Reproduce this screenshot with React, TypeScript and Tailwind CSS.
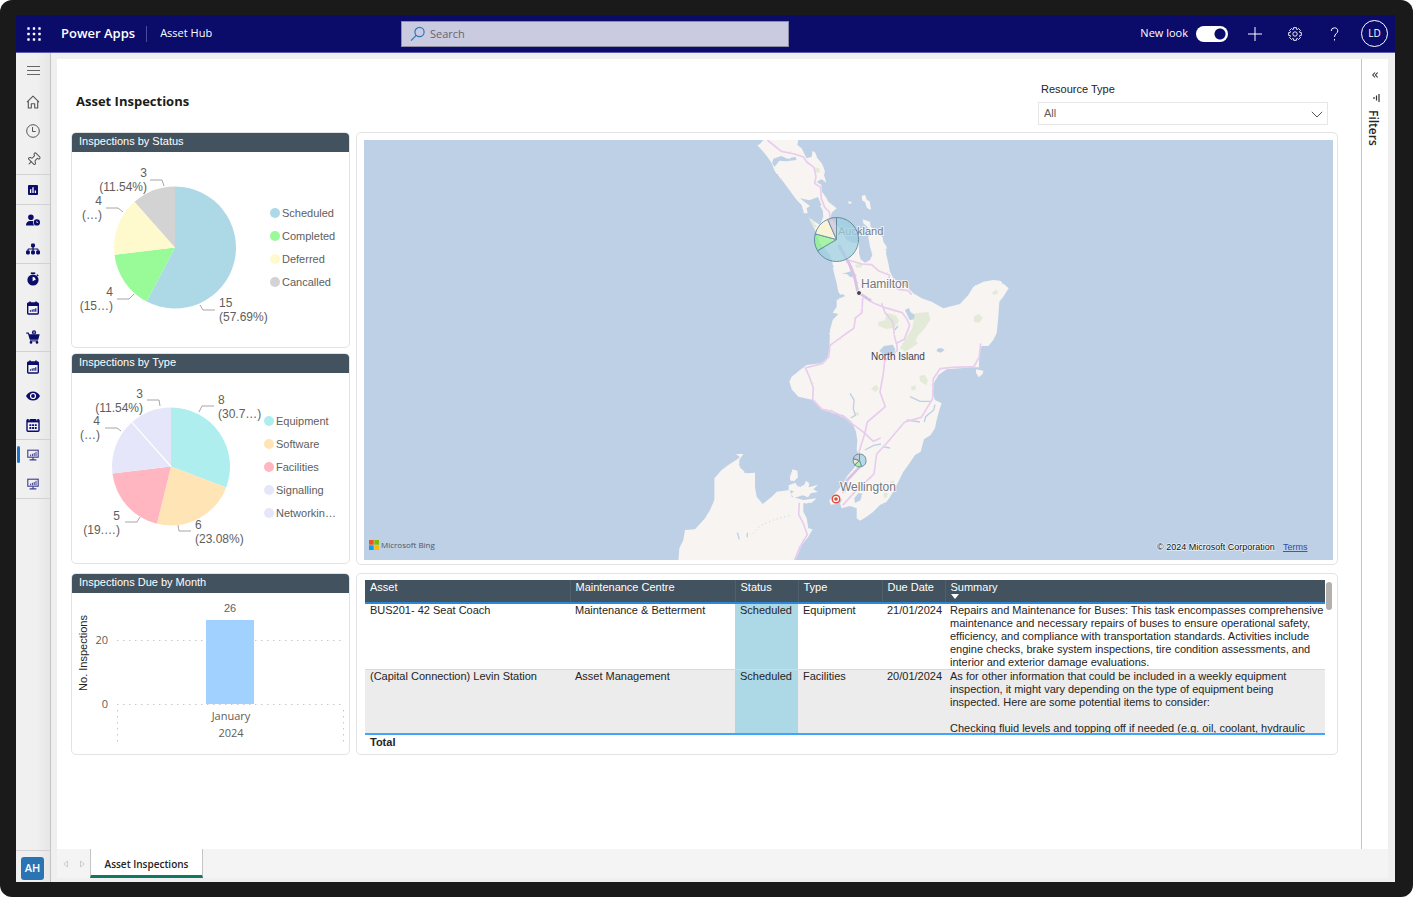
import React from "react";
import { Pin } from "lucide-react";
import { FaUserClock, FaSitemap } from "react-icons/fa6";

const segoe = "font-['Open_Sans','Noto_Sans',sans-serif]";
const arial = "font-['Liberation_Sans',Arial,sans-serif]";

/* ---------- icons ---------- */

function WaffleIcon() {
  return (
    <svg width="14" height="14" viewBox="0 0 14 14" fill="#fff" aria-hidden="true">
      {[1.5, 7, 12.5].map((y) =>
        [1.5, 7, 12.5].map((x) => <rect key={`${x}-${y}`} x={x - 1.2} y={y - 1.2} width="2.4" height="2.4" rx="0.5" />),
      )}
    </svg>
  );
}

function HomeIcon() {
  return (
    <svg width="14" height="14" viewBox="0 0 14 14" fill="none" stroke="#555" strokeWidth="1.1" strokeLinejoin="round" aria-hidden="true">
      <path d="M1 7.200 7 1.200l6 6M2.300 6v7h3V8.800h3.400V13h3V6" />
    </svg>
  );
}

function ClockIcon() {
  return (
    <svg width="14" height="14" viewBox="0 0 14 14" fill="none" stroke="#555" strokeWidth="1" aria-hidden="true">
      <circle cx="7" cy="7" r="6.3" />
      <path d="M6.500 3v4.500h3.200" />
    </svg>
  );
}

function GearIcon() {
  const teeth = 8;
  const points: string[] = [];
  for (let i = 0; i < teeth; i++) {
    const mid = (i / teeth) * 2 * Math.PI;
    [[-0.3, 5], [-0.22, 6.5], [0.22, 6.5], [0.3, 5]].forEach(([offset, r]) => {
      points.push(`${7 + r * Math.sin(mid + offset)},${7 - r * Math.cos(mid + offset)}`);
    });
  }
  return (
    <svg width="14" height="14" viewBox="0 0 14 14" fill="none" stroke="#fff" strokeWidth="0.9" strokeLinejoin="round" aria-hidden="true">
      <polygon points={points.join(" ")} />
      <circle cx="7" cy="7" r="2.2" />
    </svg>
  );
}

function ChartBoxIcon() {
  return (
    <svg width="10" height="10" viewBox="0 0 10 10" aria-hidden="true">
      <rect width="10" height="10" rx="1" fill="#0c0c6b" />
      <path d="M2.600 4.200V8M5 2.200V8M7.400 5.600V8" stroke="#fff" strokeWidth="1.3" />
    </svg>
  );
}

function StopwatchIcon() {
  return (
    <svg width="14" height="14" viewBox="0 0 14 14" aria-hidden="true">
      <path d="M4.800.400h4.400v1.600H4.800z" fill="#0c0c6b" />
      <path d="m11.300 2.200 1.400 1.400-.9.9-1.400-1.400z" fill="#0c0c6b" />
      <circle cx="7" cy="8" r="5.6" fill="#0c0c6b" />
      <path d="M6.600 4.800v4.400l3.200-1.800A3.400 3.400 0 0 0 6.600 4.800z" fill="#fff" />
    </svg>
  );
}

function CalendarChartIcon() {
  return (
    <svg width="12" height="14" viewBox="0 0 12 14" aria-hidden="true">
      <path d="M2.200.400h1.600v2H2.200zM8.200.400h1.600v2H8.200z" fill="#0c0c6b" />
      <rect x=".7" y="2" width="10.6" height="11" rx="1" fill="#f4f4fa" stroke="#0c0c6b" strokeWidth="1.4" />
      <path d="M.7 2h10.600v3H.7z" fill="#0c0c6b" />
      <path d="M3.400 9.200v1.600M5.200 8.400v2.400M7 8v2.800M8.800 7.200v3.600" stroke="#0c0c6b" strokeWidth="1.1" />
    </svg>
  );
}

function CalendarDotsIcon() {
  return (
    <svg width="14" height="14" viewBox="0 0 14 14" aria-hidden="true">
      <rect x="1" y="1.6" width="12" height="11.6" rx="1" fill="#f4f4fa" stroke="#0c0c6b" strokeWidth="1.4" />
      <path d="M1 1.400h12v3H1z" fill="#0c0c6b" />
      <path d="M3.200.600v1.800M10.800.600v1.800" stroke="#fff" strokeWidth=".9" />
      <path d="M3.400 7.200h7.400M3.400 10h7.400" stroke="#0c0c6b" strokeWidth="1.8" strokeDasharray="1.9 .8" />
    </svg>
  );
}

function CartIcon() {
  return (
    <svg width="14" height="14" viewBox="0 0 14 14" fill="#0c0c6b" aria-hidden="true">
      <path d="M.3 2.600h2.300l.8 1.600h10.300l-1.500 5.600H3.800L2 3.800H.3z" />
      <circle cx="8" cy="2.4" r="2.1" />
      <path d="M7.600 1.400h.9v2h-.9z" fill="#fff" />
      <path d="M4 10.400h8v1H4z" />
      <circle cx="5" cy="12.4" r="1.3" />
      <circle cx="11" cy="12.4" r="1.3" />
    </svg>
  );
}

function EyeIcon() {
  return (
    <svg width="14" height="10" viewBox="0 0 14 10" aria-hidden="true">
      <path d="M0 5C1.600 2 4 .4 7 .4S12.400 2 14 5c-1.600 3-4 4.600-7 4.600S1.600 8 0 5z" fill="#0c0c6b" />
      <circle cx="7" cy="5" r="2.5" fill="none" stroke="#fff" strokeWidth="1.2" />
    </svg>
  );
}

function MonitorIcon() {
  return (
    <svg width="12" height="12" viewBox="0 0 12 12" fill="none" stroke="#3c3c8c" aria-hidden="true">
      <rect x=".8" y="1.2" width="10.4" height="7" strokeWidth="1.1" />
      <path d="M3.600 5.600v1.600M5.400 4.800v2.400M7.200 4v3.200M9 2.800v4.400" strokeWidth="1" />
      <path d="M6 8.400v2M2.600 10.800h6.800" strokeWidth="1.2" />
    </svg>
  );
}

/* ---------- pie chart ---------- */

type Slice = { name: string; value: number; color: string };
type Callout = { lines: [string, string]; x: number; y: number; anchor: "start" | "end"; path: string };

function slicePath(cx: number, cy: number, r: number, from: number, to: number) {
  const a = from * 2 * Math.PI;
  const b = to * 2 * Math.PI;
  const large = to - from > 0.5 ? 1 : 0;
  return `M${cx} ${cy}L${cx + r * Math.sin(a)} ${cy - r * Math.cos(a)}A${r} ${r} 0 ${large} 1 ${cx + r * Math.sin(b)} ${cy - r * Math.cos(b)}Z`;
}

function slicesOf(values: number[]) {
  const total = values.reduce((s, v) => s + v, 0);
  let sum = 0;
  return values.map((v) => {
    const from = sum / total;
    sum += v;
    return { from, to: sum / total };
  });
}

function Pie({ data, cx, cy, r, callouts, label, height, divider }: {
  data: Slice[]; cx: number; cy: number; r: number; callouts: Callout[]; label: string; height: number; divider?: boolean;
}) {
  const parts = slicesOf(data.map((d) => d.value));
  const cut = parts[parts.length - 1].from * 2 * Math.PI;
  return (
    <svg width="198" height={height} viewBox={`0 0 198 ${height}`} role="img" aria-label={label} className="shrink-0">
      {data.map((d, i) => (
        <path key={d.name} d={slicePath(cx, cy, r, parts[i].from, parts[i].to)} fill={d.color} />
      ))}
      {divider && <path d={`M${cx} ${cy}L${cx + r * Math.sin(cut)} ${cy - r * Math.cos(cut)}`} stroke="#fff" strokeWidth="1.2" />}
      {callouts.map((c) => (
        <g key={c.path}>
          <path d={c.path} fill="none" stroke="#a6a6a6" />
          <text textAnchor={c.anchor} fontSize="12" fill="#605e5c">
            <tspan x={c.x} y={c.y}>{c.lines[0]}</tspan>
            <tspan x={c.x} y={c.y + 14}>{c.lines[1]}</tspan>
          </text>
        </g>
      ))}
    </svg>
  );
}

function Legend({ data }: { data: Slice[] }) {
  return (
    <ul className="flex flex-col">
      {data.map((d) => (
        <li key={d.name} className="flex h-[23px] items-center gap-0.5 text-[11px] leading-[23px] whitespace-nowrap text-[#605e5c]">
          <svg width="10" height="10" aria-hidden="true"><circle cx="5" cy="5" r="5" fill={d.color} /></svg>
          {d.name}
        </li>
      ))}
    </ul>
  );
}

const statusData: Slice[] = [
  { name: "Scheduled", value: 15, color: "#add8e6" },
  { name: "Completed", value: 4, color: "#98fb98" },
  { name: "Deferred", value: 4, color: "#fffacd" },
  { name: "Cancalled", value: 3, color: "#d3d3d3" },
];
const statusCallouts: Callout[] = [
  { lines: ["15", "(57.69%)"], x: 147, y: 155, anchor: "start", path: "M128 153l3 5h12" },
  { lines: ["4", "(15…)"], x: 41, y: 144, anchor: "end", path: "M45 147h12l5-5" },
  { lines: ["4", "(…)"], x: 30, y: 53, anchor: "end", path: "M34 56h12l5 4" },
  { lines: ["3", "(11.54%)"], x: 75, y: 25, anchor: "end", path: "M78 28h12l2 6" },
];

const typeData: Slice[] = [
  { name: "Equipment", value: 8, color: "#afeeee" },
  { name: "Software", value: 6, color: "#ffe4b5" },
  { name: "Facilities", value: 5, color: "#ffb6c1" },
  { name: "Signalling", value: 4, color: "#e6e6fa" },
  { name: "Networkin…", value: 3, color: "#e6e6fa" },
];
const typeCallouts: Callout[] = [
  { lines: ["8", "(30.7…)"], x: 146, y: 31, anchor: "start", path: "M127 39l3-6h12" },
  { lines: ["6", "(23.08%)"], x: 123, y: 156, anchor: "start", path: "M106 152l1 6h12" },
  { lines: ["5", "(19.…)"], x: 48, y: 147, anchor: "end", path: "M53 149h12l3-5" },
  { lines: ["4", "(…)"], x: 28, y: 52, anchor: "end", path: "M33 55h12l4 3" },
  { lines: ["3", "(11.54%)"], x: 71, y: 25, anchor: "end", path: "M75 27h12l1 6" },
];

/* ---------- cards ---------- */

const cardShell = "rounded-[5px] border border-[#e3e3e3] bg-white";

function ChartCard({ title, children, className = "" }: { title: string; children: React.ReactNode; className?: string }) {
  return (
    <section className={`overflow-hidden ${cardShell} ${className}`}>
      <h2 className="h-[19px] bg-[#42535f] px-[7px] text-[11px] leading-4 text-white">{title}</h2>
      {children}
    </section>
  );
}

function MonthChart() {
  return (
    <svg width="277" height="161" viewBox="0 0 277 161" role="img" aria-label="Inspections due by month">
      <g stroke="#c8c8c8" strokeDasharray="1.500 4.500">
        <path d="M45 47.500H272M45 111.500H272M45.500 117v36M271.500 117v36" />
      </g>
      <rect x="134" y="27" width="48" height="84" fill="#a0d1ff" />
      <g fontSize="11" fill="#605e5c" textAnchor="middle">
        <text x="158" y="19">26</text>
        <g fontFamily="'Open Sans', 'Noto Sans', sans-serif">
          <text x="159" y="127">January</text>
          <text x="159" y="144">2024</text>
          <text x="36" y="51" textAnchor="end">20</text>
          <text x="36" y="115" textAnchor="end">0</text>
        </g>
      </g>
      <text transform="translate(15 60) rotate(-90)" textAnchor="middle" fontSize="11" fill="#252423">No. Inspections</text>
    </svg>
  );
}

/* ---------- map ---------- */

const northIsland =
  "M292 46l8-4 12-14h103l-3 17 13 10 7 15 8 15 15-5 3-18 8 6 6 17 12 13 6 12 5 15-3 10 7 23-14-10-15 7 14 10 2 20 14 20 5 10 25 20-15 13-3 14 8 13 25 25 15 30 20 10 17-5v35l5 18 13 10 15-8 7-15-7-25-5-30 7-15-10-15-12-10-2-12 22 7 2 15 18 15 18 17 2 13 10 15-2 20 7 30 5 25 10 20 25 20 20 10 15 15 25 15 30 10 35 20 50-13 25-27 15-25 30-15 30-5 20 2 26 23-16 25-12 15-3 45-5 50-10 20-15 18h-20l-7 22-1 42-27 0-30 3-40 3-25 17-13 25-4 30 7 20 20 10-7 20-8 30-5 25-13 20-20 13-10 37-17 10-20 30-15 20-15 30-15 30-20 30-20 10-20 20-20 15-20 12-10-7v-30l-20-7-25 7-5-15 8-12-18 7-15 7-7-10 12-17 15-15 15-20 10-20 25-30 15-25-10-25 2-30-4-25-13-30-25-20-30-5-35-12-25-28-45-10-20-22-7-23 7-15 25-20 20-15 40-5 20-10 8-30 2-60 8-30 17-18-17-4 12-18v-20l15-10-10-15-5-25-5-20-5-20-2-20-8-25-30-35-12-35-18-35-3-8 13 10 20 13 10-25-2-20-10-15-8 10-15-10-15 10 3 15h-11l-7-25-15-15-15-20-25-35-25-30-10-25-10-15-15-20z";

const southIsland =
  "M55 1295l3-40 12-25 5-30 30-2 30-33 15-25 13-30v-65l22-25 20-15 20-13 15-10-12-10 22 0-12 18v20l20 20 27-2v42l5 30 18 22 27-22 15-15 40-5 5 20 35 10 40-5-15 13-25 2v25l10 20 5 30 13 3-13 22-20 25-10 25-15 30z";

function MapPie({ cx, cy, r, values }: { cx: number; cy: number; r: number; values: number[] }) {
  const colors = ["#9fd0e2", "#8df58d", "#fbf3cf", "#cfc6d6"];
  return (
    <g stroke="#427488" strokeWidth="1" opacity="0.75">
      {slicesOf(values).map((s, i) => (
        <path key={i} d={slicePath(cx, cy, r, s.from, s.to)} fill={colors[i]} />
      ))}
    </g>
  );
}

function InspectionMap() {
  return (
    <svg viewBox="364 140 969 420" preserveAspectRatio="xMidYMid slice" className="block h-[420px] w-full bg-[#bdd0e5]" role="img" aria-label="Map of inspections in New Zealand">
      <defs>
        <filter id="coast" x="-5%" y="-5%" width="110%" height="110%">
          <feTurbulence type="fractalNoise" baseFrequency="0.16" numOctaves="2" seed="4" />
          <feDisplacementMap in="SourceGraphic" scale="5" xChannelSelector="R" yChannelSelector="G" />
        </filter>
      </defs>
      <g transform="translate(660 130) scale(0.33333)">
        <g filter="url(#coast)">
          <path d={northIsland} fill="#f7f4f2" />
          <path d={southIsland} fill="#f7f4f2" />
          <path
            d="M605 198l10-4 6 16 8 4 4 26-12-6-6-18-8-4zM565 214l10 2-2 6-8-2zM948 718l22 4-2 10-12 10-8-14zM390 1040l8-22 14 4 2 20-12 12-12-4zM386 1066l20-8 8 12 18-4 6-14 10 8-2 12 28-8-14 14 14 8-22 4-8 12-16-6-26 8-10-12 10-8-16-4zM508 1112l14-12 14 8-8 14-16 2z"
            fill="#f7f4f2"
          />
          <path
            d="M340 86l24-8 18 8 24-6 4 10-32 4-20-2-14 18-8-10zM420 205l28 6 26-10 10 24-16 14-22-14zM735 540l12-6 4 12 16 10-2 12-16 2zM658 662l14-14 26-4 8 14-4 12-30 6zM832 656l12-2 10 6-12 8-12-4zM583 1105l12-16 12 2-6 20-16 8zM545 432l28-8 18 12-20 6-10-10zM532 500l14-8 10 6-14 6z"
            fill="#bdd0e5"
          />
          <path
            d="M765 550l40-4 6 24-18 26-20 22-10 24-24 20-20-6 22-36 16-26zM655 575l20-4 6-22 26 6 10 18-14 20-24 4-24-10zM725 640l40-8 10 8-30 20-14 6zM942 560l14-8 12 12-10 14-16-2zM995 490l14-12 6 12-12 4zM778 738l16-4 10 18-6 14-18-12zM752 770l14-4 2 10-10 6zM632 778l16-14 8 10-8 12zM585 846l12 2-2 10-10-2zM690 1055l12-4 2 14-10 4zM585 404l24-4-4 12-16 2zM670 1090l12-2v14l-10 2zM466 112l14 4-2 12-12-2zM448 262l10 8 12 20-8 4z"
            fill="#e4ead8"
          />
        </g>
        <g fill="none" stroke="#bdd0e5" strokeWidth="4">
          <path d="M704 600l10-12M570 790l12 20-2 26 6 20-14 8M750 800l30 14 34 0M825 824l-4 16-24 20-4 16M615 960l26-14 22-4M740 870l40 6M668 950l22 4" />
          <path d="M280 1210l20-22 40-18 50-14" strokeDasharray="3 9" strokeWidth="3" />
          <path d="M232 1208l6 20M262 1208v14" />
        </g>
        <g filter="url(#coast)">
          <g fill="none" stroke="#e9cdee" strokeWidth="5" strokeLinejoin="round">
            <path d="M322 30l22 18 20 16 40 8 28 10 8 14 22 16 6 28-4 20 18 12 2 34 10 26 14 14 4 30" />
            <path d="M540 345l22 45 14 22 10 30 6 30 6 16 14 14 30 18 30 12 55 16 14 20 8 18-16 42-24 12-6-24-4-40-24-28-10-28M565 390l40 12 30 2 20 18 34 14-4 18 30 24 30 4 10 12" />
            <path d="M608 504l-2 44-20 16-4 30-36 26-36 26-4 34-18 20-52 14 12 26 12 34-2 34 28 30 30 6 34 16 30 24 32 24 28 26 22-10" />
            <path d="M710 636l2 26-38 30-4 40-10 54 16 44-54 46-8 36-16 50-2 34M962 640l-4 40-16 30-66 2-36 4-20 30-2 60-34 56-50 14-56 66-28 30-8 60-54 50-40 44M600 1010l-40 40-12 40" />
            <path d="M418 1118l-2 36 14 26 12 34-22 36-18 44" />
          </g>
          <path d="M535 345l32 55 18 48 8 38 40 26M600 1010l-38 40-10 36" fill="none" stroke="#d9c3e4" strokeWidth="8" strokeLinejoin="round" />
        </g>
      </g>
      <circle cx="859" cy="293" r="2.5" fill="#444" stroke="#fff" />
      <g fill="#77777c" stroke="#fff" strokeWidth="2" strokeOpacity="0.7" paintOrder="stroke">
        <text x="838" y="235" fontSize="11">Auckland</text>
        <text x="861" y="288" fontSize="12">Hamilton</text>
        <text x="840" y="491" fontSize="12">Wellington</text>
        <text x="871" y="360" fontSize="10" fill="#3b3f52" stroke="none">North Island</text>
      </g>
      <MapPie cx={836.5} cy={239.5} r={22} values={[12.1, 2.3, 2.6, 1.2]} />
      <MapPie cx={859.5} cy={460.5} r={6.5} values={[4.4, 1.8, 1.6, 2]} />
      <circle cx="836" cy="499" r="3.8" fill="#fff" stroke="#e34a38" strokeWidth="1.4" />
      <circle cx="836" cy="499" r="1.8" fill="#e34a38" />
      <g>
        <path d="M369 540h4.700v4.700H369z" fill="#f25022" />
        <path d="M374.300 540h4.700v4.700h-4.700z" fill="#7fba00" />
        <path d="M369 545.300h4.700v4.700H369z" fill="#00a4ef" />
        <path d="M374.300 545.300h4.700v4.700h-4.700z" fill="#ffb900" />
        <text x="381" y="548" fontSize="8" fill="#4c5866" fontFamily="'Open Sans', sans-serif">Microsoft Bing</text>
        <text x="1157" y="550" fontSize="9" fill="#111" stroke="#fff" strokeWidth="1.5" strokeOpacity="0.7" paintOrder="stroke">© 2024 Microsoft Corporation</text>
        <a href="#terms">
          <text x="1283" y="550" fontSize="9" fill="#3b46a8" textDecoration="underline">Terms</text>
        </a>
      </g>
    </svg>
  );
}

/* ---------- table ---------- */

const rows = [
  {
    asset: "BUS201- 42 Seat Coach",
    centre: "Maintenance & Betterment",
    status: "Scheduled",
    type: "Equipment",
    due: "21/01/2024",
    summary: [
      "Repairs and Maintenance for Buses: This task encompasses comprehensive maintenance and necessary repairs of buses to ensure operational safety, efficiency, and compliance with transportation standards. Activities include engine checks, brake system inspections, tire condition assessments, and interior and exterior damage evaluations.",
    ],
  },
  {
    asset: "(Capital Connection) Levin Station",
    centre: "Asset Management",
    status: "Scheduled",
    type: "Facilities",
    due: "20/01/2024",
    summary: [
      "As for other information that could be included in a weekly equipment inspection, it might vary depending on the type of equipment being inspected. Here are some potential items to consider:",
      "Checking fluid levels and topping off if needed (e.g. oil, coolant, hydraulic",
    ],
  },
];

function InspectionTable() {
  const th = "border-r border-[#4f606c] pl-[5px] text-left align-top font-normal last:border-r-0";
  const td = "pl-[5px] align-top";
  return (
    <div className={`flex items-start gap-px pt-1.5 pr-[5px] pb-1 pl-2 ${cardShell}`}>
      <table className="w-full table-fixed border-collapse text-[11px] leading-[13px] text-[#252423]">
        <colgroup>
          <col className="w-[205px]" />
          <col className="w-[165px]" />
          <col className="w-[63px]" />
          <col className="w-[84px]" />
          <col className="w-[63px]" />
          <col />
        </colgroup>
        <thead>
          <tr className="h-[23px] border-b-2 border-[#2b88d8] bg-[#42535f] leading-[14px] text-white">
            <th scope="col" className={th}>Asset</th>
            <th scope="col" className={th}>Maintenance Centre</th>
            <th scope="col" className={th}>Status</th>
            <th scope="col" className={th}>Type</th>
            <th scope="col" className={th}>Due Date</th>
            <th scope="col" className={th} aria-sort="descending">
              Summary
              <svg width="8" height="5" viewBox="0 0 8 5" className="block" aria-hidden="true"><path d="M0 0h8L4 5z" fill="#fff" /></svg>
            </th>
          </tr>
        </thead>
        <tbody>
          {rows.map((r) => (
            <tr key={r.asset} className="border-b border-[#d9d9d9] last:border-b-2 last:border-[#41a4ff] even:bg-[#ececec]">
              <td className={td}>{r.asset}</td>
              <td className={td}>{r.centre}</td>
              <td className={`${td} bg-[#add8e6]`}>{r.status}</td>
              <td className={td}>{r.type}</td>
              <td className={td}>{r.due}</td>
              <td className={td}>
                <div className={`flex flex-col gap-[13px] overflow-hidden ${r.summary.length > 1 ? "max-h-[63px]" : ""}`}>
                  {r.summary.map((p) => <p key={p}>{p}</p>)}
                </div>
              </td>
            </tr>
          ))}
        </tbody>
        <tfoot>
          <tr>
            <th scope="row" colSpan={6} className="pt-px pl-[5px] text-left font-bold">Total</th>
          </tr>
        </tfoot>
      </table>
      <div className="mt-0.5 h-7 w-1.5 shrink-0 rounded-[3px] bg-[#b3b0ad]" />
    </div>
  );
}

/* ---------- shell ---------- */

function NavButton({ label, active, children }: { label: string; active?: boolean; children: React.ReactNode }) {
  return (
    <button type="button" aria-label={label} className="relative flex h-[29px] w-full items-center justify-center">
      {active && <span className="absolute top-1.5 left-px h-[17px] w-[3px] rounded-sm bg-[#1f73c9]" />}
      {children}
    </button>
  );
}

function SideNav() {
  const group = "border-b border-[#d2d2d2]";
  return (
    <nav className="flex w-[35px] shrink-0 flex-col border-r border-[#c4c4c4] bg-linear-to-r from-[#f0f0f0] from-60% to-[#e6e6e6]">
      <button type="button" aria-label="Menu" className="flex h-[34px] items-center justify-center">
        <svg width="13" height="9" viewBox="0 0 13 9" stroke="#666" aria-hidden="true"><path d="M0 .5h13M0 4.500h13M0 8.500h13" /></svg>
      </button>
      <div className={group}>
        <NavButton label="Home"><HomeIcon /></NavButton>
        <NavButton label="Recent"><ClockIcon /></NavButton>
        <NavButton label="Pinned"><Pin size={15} strokeWidth={1.6} className="rotate-45 text-[#555]" /></NavButton>
      </div>
      <div className={group}>
        <NavButton label="Dashboards"><ChartBoxIcon /></NavButton>
      </div>
      <div className={group}>
        <NavButton label="Resources"><FaUserClock size={14} color="#0c0c6b" /></NavButton>
        <NavButton label="Organisation"><FaSitemap size={14} color="#0c0c6b" /></NavButton>
      </div>
      <div className={group}>
        <NavButton label="Timers"><StopwatchIcon /></NavButton>
        <NavButton label="Schedule"><CalendarChartIcon /></NavButton>
        <NavButton label="Orders"><CartIcon /></NavButton>
      </div>
      <div className={group}>
        <NavButton label="Plans"><CalendarChartIcon /></NavButton>
        <NavButton label="Views"><EyeIcon /></NavButton>
        <NavButton label="Calendar"><CalendarDotsIcon /></NavButton>
      </div>
      <div className={group}>
        <NavButton label="Asset inspections" active><MonitorIcon /></NavButton>
        <NavButton label="Reports"><MonitorIcon /></NavButton>
      </div>
      <div className="mt-auto flex border-t border-[#d2d2d2] px-[5px] pt-1.5 pb-0.5">
        <button type="button" className={`h-[23px] w-[23px] rounded-[3px] bg-[#2a74b4] text-[11px] font-semibold text-white ${segoe}`}>AH</button>
      </div>
    </nav>
  );
}

function TopBar() {
  return (
    <header className={`flex h-[38px] items-center border-b border-[#5b5bb0] bg-[#0b0b6a] text-white ${segoe}`}>
      <div className="flex w-[385px] shrink-0 items-center">
        <button type="button" aria-label="App launcher" className="ml-[11px]"><WaffleIcon /></button>
        <span className="ml-5 text-[13px] font-semibold">Power Apps</span>
        <span className="ml-[11px] h-4 w-px bg-[#4a4a9c]" />
        <span className="ml-[13px] text-[11px]">Asset Hub</span>
      </div>
      <div className="flex h-[26px] w-[388px] items-center gap-1 border border-[#8d8da6] bg-[#cacae0] pl-2">
        <svg width="16" height="16" viewBox="0 0 16 16" fill="none" stroke="#2678bd" strokeWidth="1.2" aria-hidden="true">
          <circle cx="9.5" cy="6" r="4.6" />
          <path d="M6.200 9.300 1 14.600" />
        </svg>
        <input aria-label="Search" placeholder="Search" className="h-full flex-1 bg-transparent text-[11px] text-[#555] outline-none placeholder:text-[#66666f]" />
      </div>
      <div className="ml-auto flex items-center">
        <label htmlFor="new-look" className="mr-2 text-[11px]">New look</label>
        <input id="new-look" type="checkbox" role="switch" defaultChecked className="h-4 w-8 appearance-none rounded-full bg-white bg-[radial-gradient(circle_at_24px_8px,#0b0b6a_5px,transparent_6px)]" />
        <button type="button" aria-label="New" className="ml-5">
          <svg width="14" height="14" viewBox="0 0 14 14" stroke="#fff" aria-hidden="true"><path d="M0 7h14M7 0v14" /></svg>
        </button>
        <button type="button" aria-label="Settings" className="ml-[26px]"><GearIcon /></button>
        <button type="button" aria-label="Help" className="ml-7">
          <svg width="9" height="14" viewBox="0 0 9 14" fill="none" stroke="#fff" aria-hidden="true">
            <path d="M1.200 4A3.300 3.300 0 0 1 4.500.8C6.400.8 7.800 2 7.800 3.900c0 2.600-3.300 2.900-3.300 6M4.500 12v1.500" />
          </svg>
        </button>
        <button type="button" className="mr-[7px] ml-[22px] h-[27px] w-[27px] rounded-full border border-white text-[10px]">LD</button>
      </div>
    </header>
  );
}

function FiltersPane() {
  return (
    <aside className="flex w-[27px] shrink-0 flex-col items-center border-l border-[#c4c4c4] bg-white pt-[13px]">
      <button type="button" aria-label="Expand filters">
        <svg width="6" height="6" viewBox="0 0 6 6" fill="none" stroke="#333" strokeWidth="1.1" aria-hidden="true"><path d="M3 .5.700 3 3 5.500M5.700.500 3.400 3l2.300 2.500" /></svg>
      </button>
      <svg width="7" height="8" viewBox="0 0 7 8" stroke="#333" className="mt-4 ml-0.5" aria-hidden="true"><path d="M6 0v8M3.500 1.500v5M1 3v2" strokeWidth="1.2" /></svg>
      <h2 className={`mt-2 mr-1 text-[12px] leading-4 font-semibold text-[#252423] [writing-mode:vertical-rl] ${segoe}`}>Filters</h2>
    </aside>
  );
}

function PageTabs() {
  return (
    <div className="flex h-[29px] bg-[#f4f4f4]">
      <div className="flex w-[33px] items-center justify-center gap-3">
        <button type="button" aria-label="Previous page">
          <svg width="5" height="8" viewBox="0 0 5 8" fill="none" stroke="#ccc" aria-hidden="true"><path d="M4.500 1v6L.8 4z" /></svg>
        </button>
        <button type="button" aria-label="Next page">
          <svg width="5" height="8" viewBox="0 0 5 8" fill="none" stroke="#ccc" aria-hidden="true"><path d="M.5 1v6l3.700-3z" /></svg>
        </button>
      </div>
      <button type="button" className={`w-[113px] border-x border-b-[3px] border-x-[#c4c4c4] border-b-[#0f7863] bg-white pt-1 text-[10px] font-semibold text-[#252423] ${segoe}`}>
        Asset Inspections
      </button>
    </div>
  );
}

export default function App() {
  return (
    <div className={`flex min-h-screen flex-col rounded-xl bg-[#1a1a1a] pt-[15px] pr-[18px] pb-[15px] pl-4 ${arial}`}>
      <TopBar />
      <div className="flex flex-1 bg-[#efefef]">
        <SideNav />
        <div className="flex min-w-0 flex-1 flex-col pt-1.5 pr-[7px] pb-1 pl-1.5">
          <div className="flex flex-1">
            <main className="min-w-0 flex-1 bg-white pr-[23px] pl-3.5">
              <div className="flex items-start justify-between pt-[22px] pr-2.5 pb-[7px]">
                <h1 className={`mt-2.5 ml-[5px] text-[13px] leading-5 font-bold text-[#1b1b1b] ${segoe}`}>Asset Inspections</h1>
                <div className="flex w-[290px] flex-col gap-[5px]">
                  <label htmlFor="resource-type" className="ml-[3px] text-[11px] leading-4 text-[#252423]">Resource Type</label>
                  <div className="relative">
                    <select id="resource-type" className="block h-[23px] w-full appearance-none border border-[#e6e6e6] bg-white px-[5px] text-[11px] text-[#605e5c]">
                      <option>All</option>
                    </select>
                    <svg width="12" height="7" viewBox="0 0 12 7" fill="none" stroke="#555" className="pointer-events-none absolute top-[9px] right-[5px]" aria-hidden="true">
                      <path d="M.8.8 6 6 11.200.8" />
                    </svg>
                  </div>
                </div>
              </div>
              <div className="grid grid-cols-[279px_1fr] gap-x-1.5 gap-y-2">
                <div className="flex flex-col gap-[5px]">
                  <ChartCard title="Inspections by Status" className="h-[216px]">
                    <div className="flex items-center pr-1">
                      <Pie data={statusData} cx={103} cy={95.5} r={61} height={191} callouts={statusCallouts} label="Inspections by status" />
                      <Legend data={statusData} />
                    </div>
                  </ChartCard>
                  <ChartCard title="Inspections by Type" className="h-[211px]">
                    <div className="flex items-center">
                      <div className="-mr-1.5"><Pie data={typeData} cx={99} cy={93.5} r={59} height={188} callouts={typeCallouts} label="Inspections by type" divider /></div>
                      <Legend data={typeData} />
                    </div>
                  </ChartCard>
                </div>
                <div className={`p-[7px] pr-1 pb-1 ${cardShell}`}>
                  <InspectionMap />
                </div>
                <ChartCard title="Inspections Due by Month">
                  <MonthChart />
                </ChartCard>
                <InspectionTable />
              </div>
            </main>
            <FiltersPane />
          </div>
          <PageTabs />
        </div>
      </div>
    </div>
  );
}
